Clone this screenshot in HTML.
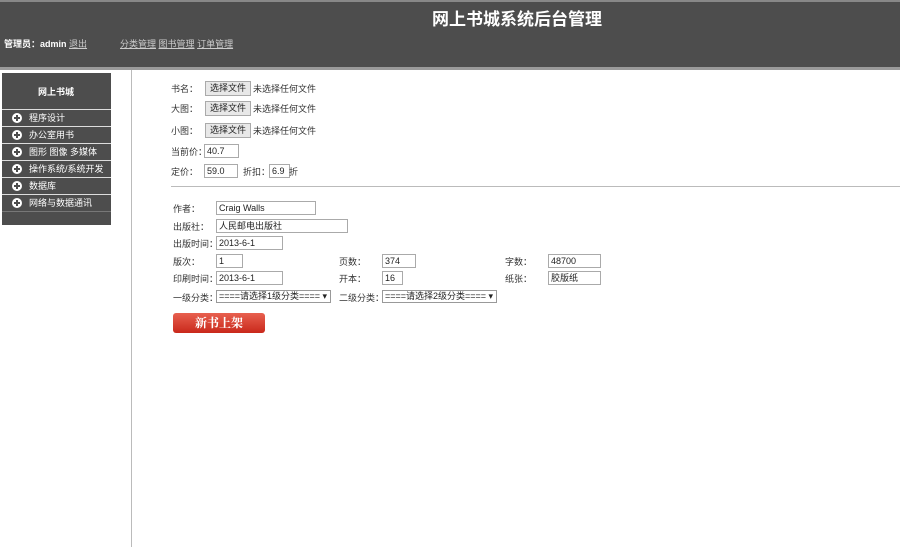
<!DOCTYPE html><html><head><meta charset="utf-8"><style>
body{margin:0;width:900px;height:547px;position:relative;background:#fff;font-family:"Liberation Sans","Noto Sans CJK SC",sans-serif;font-size:9px;color:#333;overflow:hidden}
.a{position:absolute;white-space:nowrap;line-height:11px;padding-top:2px}
#hd{position:absolute;left:0;top:0;width:900px;height:67px;background:#4d4d4d;border-bottom:3px solid #9a9a9a}
#hd:before{content:"";position:absolute;left:0;top:0;width:900px;height:2px;background:#888}
.w{color:#fff}.u{color:#ccc;text-decoration:underline}
#sb{position:absolute;left:2px;top:73px;width:109px;height:152px;background:#4d4d4d}
.it{position:absolute;left:0;width:109px;height:16px;border-top:1px solid #ddd;color:#fff;font-size:9px;line-height:16px}
.it i{position:absolute;left:10px;top:3px;width:10px;height:10px;border-radius:50%;background:#fff}
.it i:before{content:"";position:absolute;left:2px;top:4px;width:6px;height:2px;background:#4d4d4d}
.it i:after{content:"";position:absolute;left:4px;top:2px;width:2px;height:6px;background:#4d4d4d}
.it span{position:absolute;left:27px}
.btn{position:absolute;height:13px;width:44px;background:#e8e8e8;border:1px solid #aaa;font-size:9px;line-height:13px;text-align:center;color:#222}
.in{position:absolute;height:12px;border:1px solid #aaa;font-size:9px;line-height:12px;padding-left:2px;color:#222}
.sel{position:absolute;height:11px;border:1px solid #999;font-size:9px;line-height:11px;padding-left:2px;color:#222}
</style></head><body>
<div id="hd"></div>
<div class="a w" style="left:432px;top:8px;font-size:17px;line-height:20px;font-weight:bold">网上书城系统后台管理</div>
<div class="a w" style="left:4px;top:37px;font-weight:bold">管理员：admin <span class="u" style="font-weight:normal">退出</span></div>
<div class="a" style="left:120px;top:37px"><span class="u">分类管理</span> <span class="u">图书管理</span> <span class="u">订单管理</span></div>
<div style="position:absolute;left:131px;top:70px;width:1px;height:477px;background:#bbb"></div>
<div id="sb">
<div class="a w" style="left:36px;top:12px;font-weight:bold">网上书城</div>
<div class="it" style="top:36px"><i></i><span>程序设计</span></div>
<div class="it" style="top:53px"><i></i><span>办公室用书</span></div>
<div class="it" style="top:70px"><i></i><span>图形 图像 多媒体</span></div>
<div class="it" style="top:87px"><i></i><span>操作系统/系统开发</span></div>
<div class="it" style="top:104px"><i></i><span>数据库</span></div>
<div class="it" style="top:121px"><i></i><span>网络与数据通讯</span></div>
<div style="position:absolute;left:0;top:138px;width:109px;border-top:1px solid #777"></div>
</div>
<div class="a" style="left:171px;top:82px">书名：</div><div class="btn" style="left:205px;top:81px">选择文件</div><div class="a" style="left:253px;top:82px">未选择任何文件</div>
<div class="a" style="left:171px;top:102px">大图：</div><div class="btn" style="left:205px;top:101px">选择文件</div><div class="a" style="left:253px;top:102px">未选择任何文件</div>
<div class="a" style="left:171px;top:124px">小图：</div><div class="btn" style="left:205px;top:123px">选择文件</div><div class="a" style="left:253px;top:124px">未选择任何文件</div>
<div class="a" style="left:171px;top:145px">当前价：</div><div class="in" style="left:204px;top:144px;width:31px">40.7</div>
<div class="a" style="left:171px;top:165px">定价：</div><div class="in" style="left:204px;top:164px;width:30px">59.0</div>
<div class="a" style="left:243px;top:165px">折扣：</div><div class="in" style="left:269px;top:164px;width:17px">6.9</div><div class="a" style="left:289px;top:165px">折</div>
<div style="position:absolute;left:171px;top:186px;width:729px;height:1px;background:#bbb"></div>
<div class="a" style="left:173px;top:202px">作者：</div><div class="in" style="left:216px;top:201px;width:96px">Craig Walls</div>
<div class="a" style="left:173px;top:220px">出版社：</div><div class="in" style="left:216px;top:219px;width:128px">人民邮电出版社</div>
<div class="a" style="left:173px;top:237px">出版时间：</div><div class="in" style="left:216px;top:236px;width:63px">2013-6-1</div>
<div class="a" style="left:173px;top:255px">版次：</div><div class="in" style="left:216px;top:254px;width:23px">1</div>
<div class="a" style="left:339px;top:255px">页数：</div><div class="in" style="left:382px;top:254px;width:30px">374</div>
<div class="a" style="left:505px;top:255px">字数：</div><div class="in" style="left:548px;top:254px;width:49px">48700</div>
<div class="a" style="left:173px;top:272px">印刷时间：</div><div class="in" style="left:216px;top:271px;width:63px">2013-6-1</div>
<div class="a" style="left:339px;top:272px">开本：</div><div class="in" style="left:382px;top:271px;width:17px">16</div>
<div class="a" style="left:505px;top:272px">纸张：</div><div class="in" style="left:548px;top:271px;width:49px">胶版纸</div>
<div class="a" style="left:173px;top:291px">一级分类：</div><div class="sel" style="left:216px;top:290px;width:111px">====请选择1级分类==== ▾</div>
<div class="a" style="left:339px;top:291px">二级分类：</div><div class="sel" style="left:382px;top:290px;width:111px">====请选择2级分类==== ▾</div>
<div style="position:absolute;left:173px;top:313px;width:92px;height:20px;border-radius:3px;background:linear-gradient(#e8604f,#c9281b);color:#fff;font-weight:bold;font-size:12px;line-height:20px;text-align:center;font-family:'Noto Serif CJK SC',serif">新书上架</div>
</body></html>
